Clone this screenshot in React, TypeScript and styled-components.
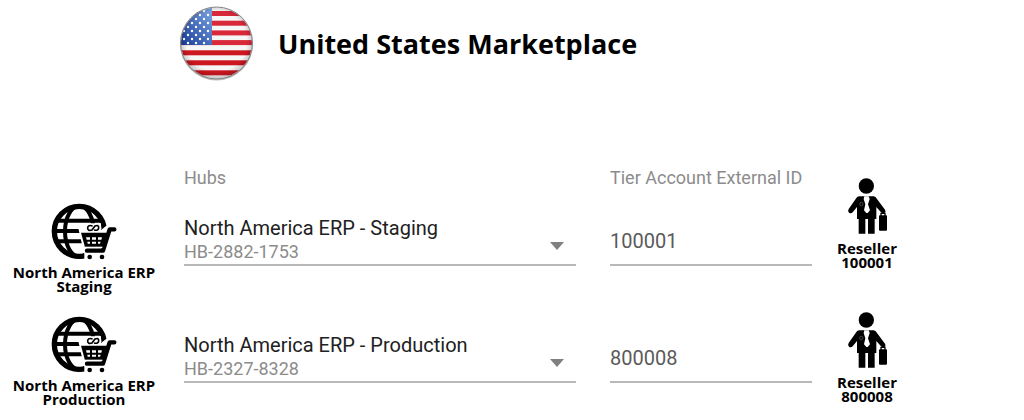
import React, { useId, useState } from "react";
import styled, { createGlobalStyle } from "styled-components";

const GlobalStyle = createGlobalStyle`
  *, *::before, *::after { box-sizing: border-box; }
  body {
    margin: 0;
    background: #fff;
    color: #000;
    font-family: "Open Sans", "Noto Sans", sans-serif;
  }
`;

const Page = styled.main`
  min-width: 760px;
`;

const Header = styled.header`
  display: flex;
  align-items: center;
  gap: 24px;
  padding: 6px 16px 6px 178px;
`;

const Title = styled.h1`
  margin: 0;
  font-size: 27px;
  line-height: 36px;
  font-weight: 700;
`;

const Content = styled.div`
  display: flex;
  align-items: flex-start;
  padding-right: 102px;
`;

const Figures = styled.div<{ $width: number; $top: number; $gap: number }>`
  flex: none;
  display: flex;
  flex-direction: column;
  gap: ${(p) => p.$gap}px;
  width: ${(p) => p.$width}px;
  padding-top: ${(p) => p.$top}px;
`;

const Figure = styled.figure<{ $gap: number }>`
  display: flex;
  flex-direction: column;
  align-items: center;
  gap: ${(p) => p.$gap}px;
  margin: 0;
`;

const Caption = styled.figcaption`
  font-size: 15px;
  line-height: 14px;
  font-weight: 700;
  text-align: center;
  white-space: nowrap;
`;

const Form = styled.form`
  flex: 1;
  display: grid;
  grid-template-columns: minmax(0, 392fr) minmax(0, 202fr);
  grid-template-rows: 33px 117px auto;
  align-items: start;
  column-gap: 34px;
  padding: 79px 0 0 16px;
  font-family: Roboto, sans-serif;
`;

const ColumnLabel = styled.label`
  font-size: 18px;
  line-height: 22px;
  color: #8c8c8c;
`;

const Field = styled.div`
  display: grid;
  grid-template-columns: 1fr 14px;
  grid-template-rows: 28px 20px;
  align-items: center;
  height: 66px;
  padding: 14px 12px 2px 0;
  border-bottom: 2px solid #b9b9b9;
`;

const HubSelect = styled.select`
  grid-area: 1 / 1 / 3 / 3;
  align-self: stretch;
  width: 100%;
  margin: 0;
  padding: 0 24px 20px 0;
  border: 0;
  background: transparent;
  appearance: none;
  font: 20px/28px Roboto, sans-serif;
  color: #212121;
`;

const HubCode = styled.span`
  grid-area: 2 / 1;
  font-size: 18px;
  line-height: 20px;
  color: #8c8c8c;
  pointer-events: none;
`;

const Arrow = styled.svg`
  grid-area: 2 / 2;
  align-self: start;
  pointer-events: none;
`;

const AccountInput = styled.input`
  width: 100%;
  height: 66px;
  margin: 0;
  padding: 18px 0 0;
  border: 0;
  border-bottom: 2px solid #b9b9b9;
  background: transparent;
  font: 20px/28px Roboto, sans-serif;
  color: #5a5a5a;
`;

const hubs = [
  { name: "North America ERP - Staging", code: "HB-2882-1753" },
  { name: "North America ERP - Production", code: "HB-2327-8328" },
];

function FlagIcon() {
  return (
    <svg width="76" height="76" viewBox="0 0 76 76" role="img" aria-label="United States flag">
      <defs>
        <clipPath id="disc"><circle cx="38.5" cy="37" r="35.5" /></clipPath>
        <linearGradient id="canton" x1="0" y1="1" x2="1" y2="0">
          <stop offset="0.1" stopColor="#1c3f9c" />
          <stop offset="1" stopColor="#7fa9e4" />
        </linearGradient>
        <radialGradient id="shade" cx="0.5" cy="0.48" r="0.53">
          <stop offset="0.8" stopColor="#000" stopOpacity="0" />
          <stop offset="1" stopColor="#000" stopOpacity="0.22" />
        </radialGradient>
      </defs>
      <circle cx="38.5" cy="38" r="36.5" fill="#bbb" />
      <g clipPath="url(#disc)">
        <rect width="76" height="76" fill="#f6f6f6" />
        {[5, 14.7, 24.4, 34.1, 44.3, 54.3, 64.3].map((y) => (
          <rect key={y} y={y} width="76" height="5" fill={y < 40 ? "#d8283a" : "#cc1620"} />
        ))}
        <rect width="34" height="39" fill="url(#canton)" />
        {[5, 9, 13, 17, 21, 25, 29, 33, 37].map((y, r) =>
          [2, 10, 18, 26].map((x) => (
            <circle key={`${x}-${y}`} cx={x + (r % 2 ? 4 : 0)} cy={y} r="1.2" fill="#fff" />
          ))
        )}
      </g>
      <circle cx="38.5" cy="37" r="35.5" fill="url(#shade)" />
      <circle cx="38.5" cy="37" r="36" fill="none" stroke="#858585" strokeWidth="1" />
    </svg>
  );
}

function GlobeCartIcon() {
  const id = useId();
  return (
    <svg width="66" height="60" viewBox="152 22 198 180" aria-hidden="true">
      <defs>
        <mask id={id}>
          <rect x="150" y="20" width="200" height="190" fill="#fff" />
          <path d="M234 101H254V86H302V106L322 90H350V210H252V178L246 154Z" fill="#000" />
        </mask>
      </defs>
      <g mask={`url(#${id})`} fill="none" stroke="#000" strokeWidth="12">
        <circle cx="237" cy="110" r="75" strokeWidth="16" />
        <ellipse cx="237" cy="110" rx="43" ry="76" />
        <path d="M172 78H302M160 109H314M172 140H302" />
      </g>
      <path d="M277 94Q262 89 262 100Q262 110 275 106L284 94Q296 89 295 100Q294 109 281 106" fill="none" stroke="#000" strokeWidth="5" />
      <path d="M342 104H328L308 168H260" fill="none" stroke="#000" strokeWidth="13" strokeLinecap="round" strokeLinejoin="round" />
      <path d="M242 114H324L308 158H254Z" />
      <path d="M257 128h12v7h-10zM275 128h12v7h-12zM293 128h12l-2 7h-10zM261 141h8v6h-7zM275 141h12v6h-12zM293 141h8l-2 6h-6z" fill="#fff" />
      <path d="M254 158H306" stroke="#fff" strokeWidth="4" />
      <circle cx="268" cy="187" r="7" />
      <circle cx="305" cy="187" r="7" />
    </svg>
  );
}

function ResellerIcon() {
  return (
    <svg width="40" height="58" viewBox="66 22 120 174" aria-hidden="true">
      <circle cx="124" cy="49" r="23" />
      <path d="M102 80H146Q152 81 156 88L180 120Q184 128 177 131Q172 133 168 128L154 112V148H149V192H129V148H121V192H101V148H96V112L83 128Q78 133 72 129Q67 125 71 118L92 88Q96 81 102 80Z" />
      <rect x="162" y="137" width="24" height="46" rx="3" />
      <path d="M168 140V131H180V140" fill="none" stroke="#000" strokeWidth="4" />
      <path d="M118 80L116 88L121 104L117 122L124 130H128L135 122L129 104L134 88L131 80Z" fill="#fff" />
      <circle cx="109" cy="103" r="5" fill="none" stroke="#666" strokeWidth="2" />
    </svg>
  );
}

function HubField({ initial, id }: { initial: number; id: string }) {
  const [index, setIndex] = useState(initial);
  return (
    <Field>
      <HubSelect id={id} aria-label="Hub" value={index} onChange={(e) => setIndex(Number(e.target.value))}>
        {hubs.map((hub, i) => (
          <option key={hub.code} value={i}>{hub.name}</option>
        ))}
      </HubSelect>
      <HubCode>{hubs[index].code}</HubCode>
      <Arrow width="14" height="8" viewBox="0 0 14 8" aria-hidden="true">
        <path d="M0 0H14L7 8Z" fill="#808080" />
      </Arrow>
    </Field>
  );
}

export default function App() {
  return (
    <Page>
      <GlobalStyle />
      <Header>
        <FlagIcon />
        <Title>United States Marketplace</Title>
      </Header>
      <Content>
        <Figures $width={168} $top={114} $gap={22}>
          <Figure $gap={3}>
            <GlobeCartIcon />
            <Caption>North America ERP<br />Staging</Caption>
          </Figure>
          <Figure $gap={3}>
            <GlobeCartIcon />
            <Caption>North America ERP<br />Production</Caption>
          </Figure>
        </Figures>
        <Form>
          <ColumnLabel htmlFor="hub-1">Hubs</ColumnLabel>
          <ColumnLabel htmlFor="account-1">Tier Account External ID</ColumnLabel>
          <HubField id="hub-1" initial={0} />
          <AccountInput id="account-1" defaultValue="100001" />
          <HubField id="hub-2" initial={1} />
          <AccountInput id="account-2" aria-label="Tier Account External ID" defaultValue="800008" />
        </Form>
        <Figures $width={110} $top={89} $gap={42}>
          <Figure $gap={6}>
            <ResellerIcon />
            <Caption>Reseller<br />100001</Caption>
          </Figure>
          <Figure $gap={6}>
            <ResellerIcon />
            <Caption>Reseller<br />800008</Caption>
          </Figure>
        </Figures>
      </Content>
    </Page>
  );
}
